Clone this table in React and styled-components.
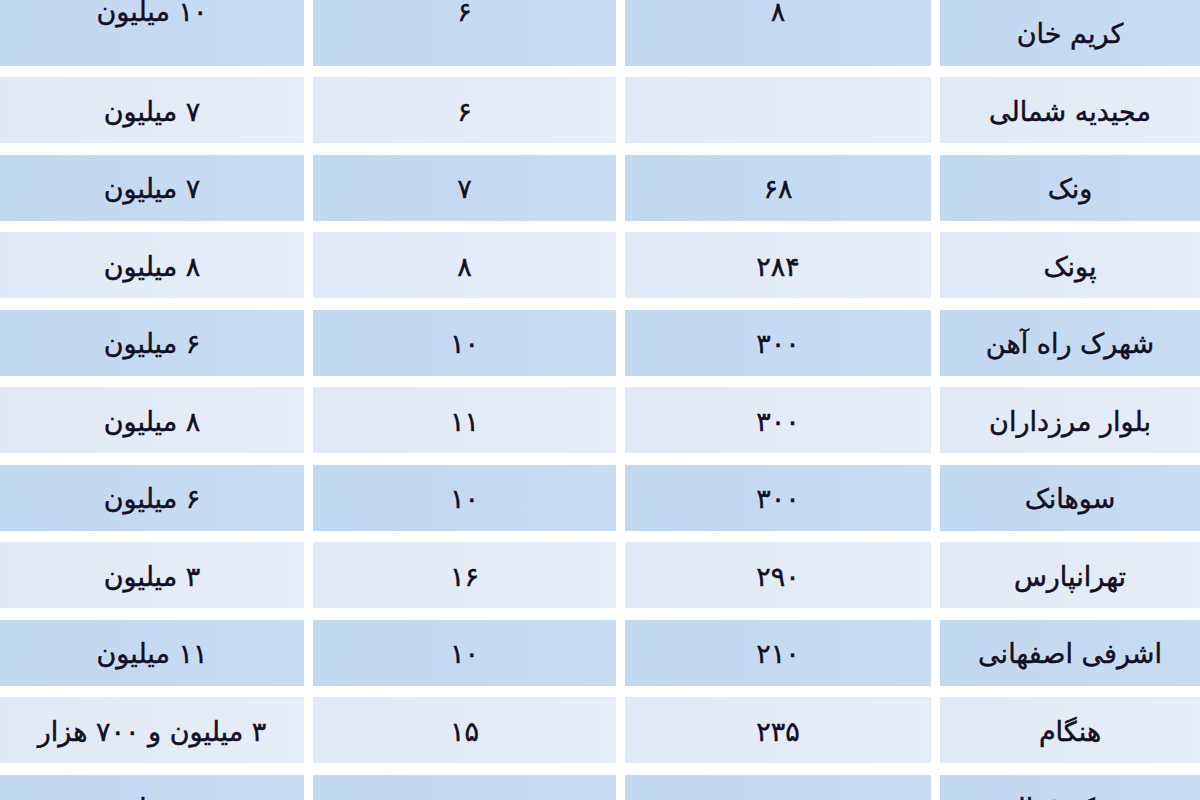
import React from "react";
import styled, { createGlobalStyle } from "styled-components";

const GlobalStyle = createGlobalStyle`
  html, body {
    margin: 0;
    padding: 0;
    background: #ffffff;
    overflow: hidden;
  }
  body {
    font-family: "DejaVu Sans", "Noto Sans", sans-serif;
  }
`;

const rows = [
  { area: "کریم خان", size: "۸", age: "۶", rent: "۱۰ میلیون", tall: true },
  { area: "مجیدیه شمالی", size: "", age: "۶", rent: "۷ میلیون" },
  { area: "ونک", size: "۶۸", age: "۷", rent: "۷ میلیون" },
  { area: "پونک", size: "۲۸۴", age: "۸", rent: "۸ میلیون" },
  { area: "شهرک راه آهن", size: "۳۰۰", age: "۱۰", rent: "۶ میلیون" },
  { area: "بلوار مرزداران", size: "۳۰۰", age: "۱۱", rent: "۸ میلیون" },
  { area: "سوهانک", size: "۳۰۰", age: "۱۰", rent: "۶ میلیون" },
  { area: "تهرانپارس", size: "۲۹۰", age: "۱۶", rent: "۳ میلیون" },
  { area: "اشرفی اصفهانی", size: "۲۱۰", age: "۱۰", rent: "۱۱ میلیون" },
  { area: "هنگام", size: "۲۳۵", age: "۱۵", rent: "۳ میلیون و ۷۰۰ هزار" },
  { area: "شهرک غزالی", size: "۳۰۰", age: "۱۲", rent: "۱۰ میلیون" },
];

function App() {
  return (
    <>
      <GlobalStyle />
      <Table>
        {rows.map((row, index) => {
          const dark = index % 2 === 0;
          return (
            <Row key={index} $tall={row.tall}>
              <Cell $dark={dark} $low={row.tall}>
                {row.area}
              </Cell>
              <Cell $dark={dark}>{row.size}</Cell>
              <Cell $dark={dark}>{row.age}</Cell>
              <Cell $dark={dark}>{row.rent}</Cell>
            </Row>
          );
        })}
      </Table>
    </>
  );
}

const Table = styled.div`
  direction: rtl;
  width: 1200px;
  margin-top: -44.5px;
  display: flex;
  flex-direction: column;
  gap: 11.5px;
`;

const Row = styled.div`
  display: grid;
  grid-template-columns: 260px 306px 303px 304px;
  column-gap: 9px;
  height: ${(p) => (p.$tall ? "110px" : "66px")};
`;

const Cell = styled.div`
  display: flex;
  align-items: ${(p) => (p.$low ? "flex-end" : "center")};
  justify-content: center;
  box-sizing: border-box;
  padding: ${(p) => (p.$low ? "0 0 14px" : "3px 0 0")};
  background: ${(p) =>
    p.$dark
      ? "linear-gradient(90deg, #c2d7f0 0%, #c8dcf2 100%)"
      : "linear-gradient(90deg, #e1e9f6 0%, #e6edf8 100%)"};
  color: #0f0f26;
  font-size: 27px;
  line-height: 36px;
  -webkit-text-stroke: 0.5px #0f0f26;
  text-shadow: 0 0 2px rgba(255, 255, 255, 0.8);
  white-space: nowrap;
`;

export default App;
